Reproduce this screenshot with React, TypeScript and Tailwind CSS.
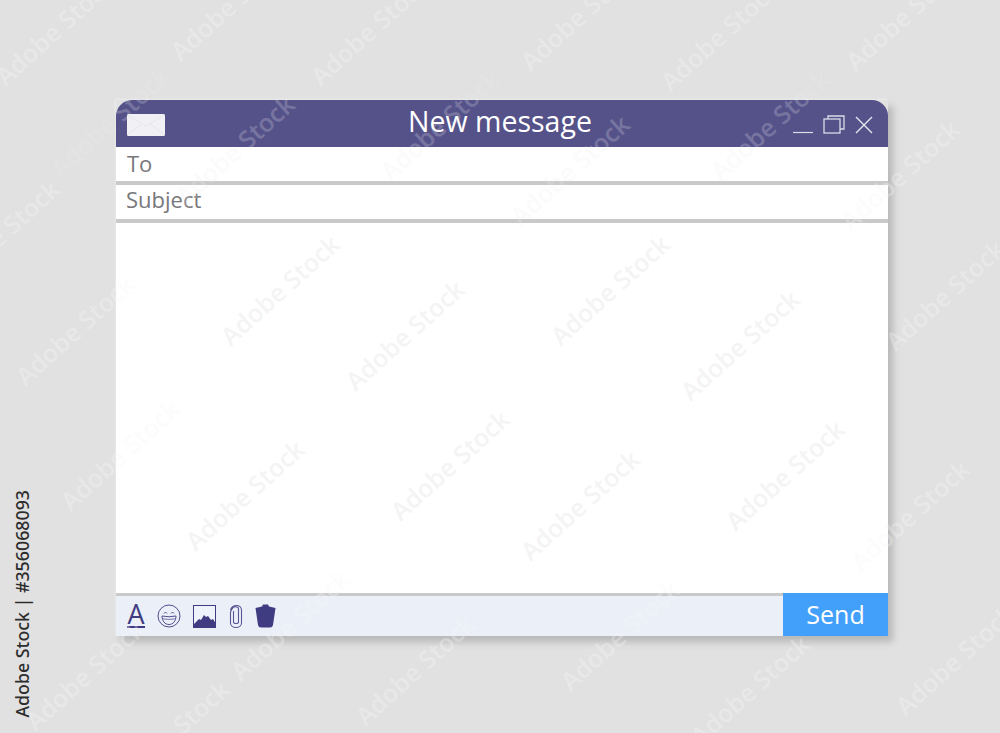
import React from "react";

const greyMark = "text-[#f8f8f8] opacity-30";
const bodyMark = "text-[#dedede] opacity-30";
const headMark = "text-[#eeeeee] opacity-[0.22]";

const marks: [number, number, string][] = [
  [55, 30, greyMark], [230, 5, greyMark], [370, 30, greyMark], [580, 15, greyMark], [720, 35, greyMark], [905, 15, greyMark],
  [110, 122, headMark], [235, 150, headMark], [440, 125, headMark], [570, 170, headMark], [770, 125, headMark], [900, 175, greyMark],
  [280, 290, bodyMark], [405, 335, bodyMark], [610, 290, bodyMark], [740, 345, bodyMark], [945, 295, greyMark], [75, 330, greyMark],
  [120, 455, greyMark], [245, 495, bodyMark], [450, 465, bodyMark], [580, 505, bodyMark], [785, 475, bodyMark], [910, 515, greyMark],
  [290, 625, greyMark], [415, 670, greyMark], [620, 635, greyMark], [750, 690, greyMark], [955, 660, greyMark], [85, 675, greyMark], [170, 735, greyMark], [0, 235, greyMark],
];

const font = "font-['Open_Sans','Noto_Sans',sans-serif]";

export default function App() {
  return (
    <div className="relative h-[733px] w-[1000px] overflow-hidden bg-[#e1e1e1] pl-[116px] pt-[100px]">
      <div className="flex h-[536px] w-[772px] flex-col shadow-[5px_6px_7px_#b8b8b8,-1px_-1px_2px_#ededed]">
        <div className="grid h-[47px] grid-cols-[1fr_auto_1fr] items-center rounded-t-[16px] bg-[#55528a] pl-[11px] pr-[15px]">
          <svg width="38" height="22" viewBox="0 0 38 22" className="mt-[2px]">
            <rect width="38" height="22" rx="1.5" fill="#f1f1f5" />
            <path d="M0 1 L19 12 L38 1 M0 21 L15 10 M38 21 L23 10" stroke="#e3e3ea" strokeWidth="0.8" fill="none" />
          </svg>
          <div className={`-mt-[5px] text-[28.5px] leading-none text-white ${font}`}>New message</div>
          <div className="mt-[3px] flex items-center justify-end gap-[10px]">
            <svg width="20" height="20" viewBox="0 0 20 20">
              <path d="M0 17.5 H20" stroke="#dcdce8" strokeWidth="1.2" />
            </svg>
            <svg width="22" height="20" viewBox="0 0 22 20" fill="none" stroke="#dcdce8" strokeWidth="1.3">
              <rect x="1" y="4" width="16" height="14" />
              <path d="M5 4 V1 H21 V14 H17" />
            </svg>
            <svg width="18" height="18" viewBox="0 0 18 18" stroke="#e6e6ef" strokeWidth="1.4">
              <path d="M1 1 L17 17 M17 1 L1 17" />
            </svg>
          </div>
        </div>
        <div className={`flex h-[38px] items-center border-b-4 border-[#c9c9c9] bg-white pb-0.5 pl-[11px] text-[22px] text-[#77777b] ${font}`}>
          To
        </div>
        <div className={`flex h-[38px] items-center border-b-4 border-[#c9c9c9] bg-white pb-[5px] pl-[10px] text-[22px] text-[#77777b] ${font}`}>
          Subject
        </div>
        <div className="flex-1 bg-white" />
        <div className="flex h-[43px]">
          <div className="flex flex-1 items-center border-t-[3px] border-[#c9c9c9] bg-[#ebf0f8] pl-[11px]">
            <div className={`mr-[12px] flex h-[24px] w-[18px] items-center justify-center border-b-2 border-[#3f3c82] pb-[3px] text-[27px] leading-none text-[#3f3c82] ${font}`}>
              A
            </div>
            <svg width="24" height="24" viewBox="0 0 24 24" className="mr-[12px]" fill="none" stroke="#3f3c82" strokeWidth="0.9">
              <circle cx="12" cy="12" r="11" />
              <path d="M5 12 Q12 13.5 19 12 C19 17 16 20.5 12 20.5 C8 20.5 5 17 5 12 Z" />
              <path d="M5.5 14.8 Q12 16 18.5 14.8" strokeWidth="0.7" />
              <path d="M7 9.5 Q8.5 6.5 10 9.5 M14 9.5 Q15.5 6.5 17 9.5" />
            </svg>
            <svg width="24" height="23" viewBox="0 0 24 23" className="mr-[12px]">
              <rect x="0.5" y="0.5" width="22" height="22" fill="#eef2fa" stroke="#3f3c82" />
              <path d="M1 22 V19 L6 14 L8 15 L11 10 L13 12 L15 11 L18 15 L20 14 L23 19 V22 Z" fill="#3f3c82" />
            </svg>
            <svg width="14" height="25" viewBox="0 0 14 25" className="mr-[12px]" fill="none" stroke="#5a5795" strokeWidth="1.1">
              <path d="M4.5 7 V18 C4.5 20 9.5 20 9.5 18 V5 C9.5 2 4 2 3 5 L1.5 8 V19 C1.5 25 12.5 25 12.5 19 V6 C12.5 0 3 0 1.5 6" />
            </svg>
            <svg width="21" height="24" viewBox="0 0 21 24">
              <path d="M0.5 4 L7 2.5 L8 0.5 H13 L14 2.5 L20.5 4 L18 21 Q17.5 23.5 15 23.5 H6 Q3.5 23.5 3 21 Z" fill="#3f3c82" />
            </svg>
          </div>
          <div className={`flex w-[105px] items-center justify-center bg-[#42a0fb] text-[25px] text-white ${font}`}>Send</div>
        </div>
      </div>

      {marks.map(([x, y, tone], i) => (
        <div
          key={i}
          className={`absolute -translate-x-1/2 -translate-y-1/2 -rotate-[42deg] whitespace-nowrap text-[25px] font-semibold ${tone} ${font}`}
          style={{ left: x, top: y }}
        >
          Adobe Stock
        </div>
      ))}

      <div className="absolute bottom-[15px] left-[13px] rotate-180 font-['Noto_Sans',sans-serif] text-[17.8px] font-medium leading-[19px] text-[#2d2d2d] [writing-mode:vertical-rl]">
        Adobe Stock | #356068093
      </div>
    </div>
  );
}
